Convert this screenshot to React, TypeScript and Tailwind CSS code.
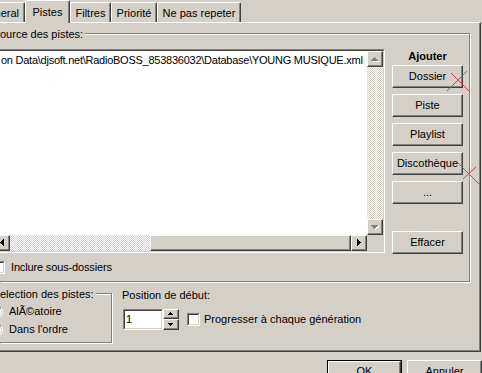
import React from "react";

const raised =
  "bg-[#d4d0c8] border border-t-white border-l-white border-r-[#404040] border-b-[#404040] shadow-[inset_-1px_-1px_0_#808080]";
const checker =
  "[background-image:repeating-conic-gradient(#ffffff_0%_25%,#d4d0c8_0%_50%)] [background-size:2px_2px]";

type R = [number, number, number, number];
const UP: R[] = [[3, 0, 1, 1], [2, 1, 3, 1], [1, 2, 5, 1], [0, 3, 7, 1]];
const DOWN: R[] = [[0, 0, 7, 1], [1, 1, 5, 1], [2, 2, 3, 1], [3, 3, 1, 1]];
const LEFT: R[] = [[0, 3, 1, 1], [1, 2, 1, 3], [2, 1, 1, 5], [3, 0, 1, 7]];
const RIGHT: R[] = [[0, 0, 1, 7], [1, 1, 1, 5], [2, 2, 1, 3], [3, 3, 1, 1]];
const SUP: R[] = [[2, 0, 1, 1], [1, 1, 3, 1], [0, 2, 5, 1]];
const SDOWN: R[] = [[0, 0, 5, 1], [1, 1, 3, 1], [2, 2, 1, 1]];

function Arrow({ rects, w, h, disabled }: { rects: R[]; w: number; h: number; disabled?: boolean }) {
  return (
    <svg width={w + 1} height={h + 1} shapeRendering="crispEdges">
      {disabled &&
        rects.map((r, i) => <rect key={"s" + i} x={r[0] + 1} y={r[1] + 1} width={r[2]} height={r[3]} fill="#ffffff" />)}
      {rects.map((r, i) => (
        <rect key={i} x={r[0]} y={r[1]} width={r[2]} height={r[3]} fill={disabled ? "#808080" : "#000000"} />
      ))}
    </svg>
  );
}

function Btn({ children, className = "" }: { children?: React.ReactNode; className?: string }) {
  return (
    <div className={`flex h-[23px] w-[71px] items-center justify-center ${raised} ${className}`}>{children}</div>
  );
}

function Tab({ label, className = "", selected }: { label: string; className?: string; selected?: boolean }) {
  if (selected) {
    return (
      <div
        className={`mb-[-1px] flex h-[23px] justify-center rounded-t-[2px] border-t border-l border-r border-t-white border-l-white border-r-[#404040] bg-[#d4d0c8] pt-[5px] shadow-[inset_-1px_0_0_#808080] ${className}`}
      >
        {label}
      </div>
    );
  }
  return (
    <div
      className={`flex h-[20px] justify-center rounded-t-[2px] border-t border-l border-r border-t-white border-l-white border-r-[#404040] pt-[4px] shadow-[inset_-1px_0_0_#808080] ${className}`}
    >
      {label}
    </div>
  );
}

function Sunken13() {
  return (
    <div className="h-[13px] w-[13px] border border-t-[#808080] border-l-[#808080] border-r-white border-b-white">
      <div className="h-full w-full border border-t-[#404040] border-l-[#404040] border-r-[#d4d0c8] border-b-[#d4d0c8] bg-white" />
    </div>
  );
}

function Radio() {
  return (
    <div className="h-[12px] w-[12px] rounded-full border border-t-[#808080] border-l-[#808080] border-r-white border-b-white">
      <div className="h-full w-full rounded-full border border-t-[#404040] border-l-[#404040] border-r-[#d4d0c8] border-b-[#d4d0c8] bg-white" />
    </div>
  );
}

export default function App() {
  const path = "on Data\\djsoft.net\\RadioBOSS_853836032\\Database\\YOUNG MUSIQUE.xml";
  return (
    <div className="relative h-[373px] w-[482px] overflow-hidden bg-[#d4d0c8] font-['Liberation_Sans',Arial,sans-serif] text-[11px] leading-[13px] text-black">
      {/* Tabs */}
      <div className="relative z-10 flex h-[22px] items-end">
        <div className="flex h-[20px] w-[25px] justify-end rounded-tr-[2px] border-t border-r border-t-white border-r-[#404040] pt-[4px] pr-[5px] shadow-[inset_-1px_0_0_#808080]">
          neral
        </div>
        <Tab label="Pistes" selected className="w-[45px]" />
        <Tab label="Filtres" className="w-[41px]" />
        <Tab label="Priorité" className="w-[46px]" />
        <Tab label="Ne pas repeter" className="w-[84px]" />
      </div>

      {/* Panel */}
      <div className="h-[330px] w-[481px] border-t border-r border-b border-t-white border-r-[#404040] border-b-[#404040] pt-[10px] shadow-[inset_-1px_-1px_0_#808080]">
        {/* Source group */}
        <div className="relative h-[249px] w-[470px] border-t border-r border-b border-[#808080] shadow-[inset_0_1px_0_#ffffff,1px_1px_0_#ffffff]">
          <div className="absolute top-[-6px] left-0 bg-[#d4d0c8] pr-[2px]">ource des pistes:</div>
          <div className="flex gap-[7px] pt-[15px]">
            {/* List box */}
            <div className="flex h-[204px] w-[385px] flex-col border-t border-r border-b border-t-[#808080] border-r-white border-b-white">
              <div className="flex flex-1 flex-col border-t border-r border-b border-t-[#404040] border-r-[#d4d0c8] border-b-[#d4d0c8] bg-white">
                <div className="flex flex-1">
                  <div className="flex-1 overflow-hidden whitespace-nowrap pt-[3px] pl-[1px] tracking-[-0.25px]">{path}</div>
                  <div className="flex w-[16px] flex-col">
                    <div className={`flex h-[16px] items-center justify-center ${raised}`}>
                      <Arrow rects={UP} w={7} h={4} disabled />
                    </div>
                    <div className={`flex-1 ${checker}`} />
                    <div className={`flex h-[16px] items-center justify-center ${raised}`}>
                      <Arrow rects={DOWN} w={7} h={4} disabled />
                    </div>
                  </div>
                </div>
                <div className="flex h-[16px]">
                  <div className={`ml-[-6px] flex w-[16px] items-center justify-center pl-[1px] ${raised}`}>
                    <Arrow rects={LEFT} w={4} h={7} />
                  </div>
                  <div className={`w-[140px] ${checker}`} />
                  <div className={`flex-1 ${raised}`} />
                  <div className={`flex w-[16px] items-center justify-center pl-[1px] ${raised}`}>
                    <Arrow rects={RIGHT} w={4} h={7} />
                  </div>
                  <div className="w-[16px] bg-[#d4d0c8]" />
                </div>
              </div>
            </div>
            {/* Right column */}
            <div className="flex w-[71px] flex-col">
              <div className="pt-[1px] text-center font-bold">Ajouter</div>
              <Btn className="mt-[2px]">Dossier</Btn>
              <Btn className="mt-[6px]">Piste</Btn>
              <Btn className="mt-[6px]">Playlist</Btn>
              <Btn className="mt-[6px]">Discothèque</Btn>
              <Btn className="mt-[6px]">...</Btn>
              <Btn className="mt-[27px]">Effacer</Btn>
            </div>
          </div>
          <div className="mt-[7px] flex items-center">
            <div className="ml-[-8px]">
              <Sunken13 />
            </div>
            <span className="ml-[6px] tracking-[-0.15px]">Inclure sous-dossiers</span>
          </div>
        </div>

        {/* Bottom area */}
        <div className="mt-[7px] flex items-start">
          <div className="relative mt-[4px] h-[50px] w-[112px] border-t border-r border-b border-[#808080] shadow-[inset_0_1px_0_#ffffff,1px_1px_0_#ffffff]">
            <div className="absolute top-[-6px] left-0 bg-[#d4d0c8] pr-[2px]">election des pistes:</div>
            <div className="flex flex-col gap-[5px] pt-[11px]">
              <div className="flex items-center">
                <div className="ml-[-9px]">
                  <Radio />
                </div>
                <span className="ml-[6px]">AlÃ©atoire</span>
              </div>
              <div className="flex items-center">
                <div className="ml-[-9px]">
                  <Radio />
                </div>
                <span className="ml-[6px]">Dans l'ordre</span>
              </div>
            </div>
          </div>
          <div className="ml-[10px] flex flex-col">
            <div>Position de début:</div>
            <div className="mt-[7px] flex items-center">
              <div className="ml-[1px] h-[21px] w-[40px] border border-t-[#808080] border-l-[#808080] border-r-white border-b-white">
                <div className="flex h-full w-full items-center border border-t-[#404040] border-l-[#404040] border-r-[#d4d0c8] border-b-[#d4d0c8] bg-white pl-[1px]">
                  1
                </div>
              </div>
              <div className="flex h-[21px] w-[16px] flex-col">
                <div className={`flex h-[10px] items-center justify-center ${raised}`}>
                  <Arrow rects={SUP} w={5} h={3} />
                </div>
                <div className={`flex h-[11px] items-center justify-center ${raised}`}>
                  <Arrow rects={SDOWN} w={5} h={3} />
                </div>
              </div>
              <div className="ml-[8px]">
                <Sunken13 />
              </div>
              <span className="ml-[4px]">Progresser à chaque génération</span>
            </div>
          </div>
        </div>
      </div>

      {/* Dialog buttons */}
      <div className="mt-[8px] flex gap-[5px] pl-[327px]">
        <div className="h-[23px] w-[76px] border border-black">
          <div className={`flex h-full w-full items-center justify-center ${raised}`}>OK</div>
        </div>
        <div className={`flex h-[23px] w-[75px] shrink-0 items-center justify-center ${raised}`}>Annuler</div>
      </div>

      {/* Red pen marks */}
      <svg className="pointer-events-none absolute top-0 left-0" width="482" height="373">
        <g stroke="#e8394a" strokeWidth="1" fill="none">
          <path d="M447 91 L467 71" />
          <path d="M451 73 L470 92" />
          <path d="M458 163 L480 185" />
          <path d="M463 179 L476 167" />
        </g>
      </svg>
    </div>
  );
}
